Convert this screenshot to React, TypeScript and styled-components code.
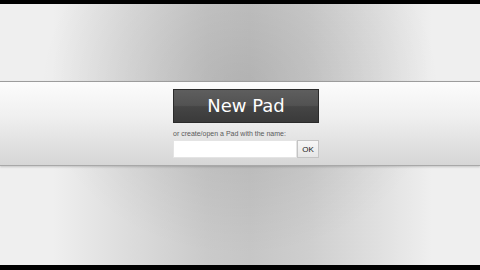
import React from "react";
import styled, { createGlobalStyle } from "styled-components";

const Global = createGlobalStyle`
  html, body { margin: 0; padding: 0; background: #000; }
  body { width: 480px; height: 270px; overflow: hidden; }
`;

const Frame = styled.div`
  width: 480px;
  height: 270px;
  box-sizing: border-box;
  padding: 4px 0 5px;
  background: #000;
  display: flex;
  flex-direction: column;
`;

const Screen = styled.div`
  flex: 1;
  display: flex;
  flex-direction: column;
  background:
    radial-gradient(ellipse 200px 170px at 240px 81px, rgba(0,0,0,0.1), rgba(0,0,0,0) 100%),
    linear-gradient(to right, #efefef 0%, #efefef 11%, #dcdcdc 27%, #cacaca 43%, #c6c6c6 52%, #cecece 64%, #e0e0e0 79%, #efefef 90%, #efefef 100%);
`;

const Spacer = styled.div<{ $h: number }>`
  height: ${(p) => p.$h}px;
  flex: none;
`;

const Band = styled.div`
  flex: none;
  box-sizing: border-box;
  height: 85px;
  border-top: 1px solid #9c9c9c;
  border-bottom: 1px solid #a8a8a8;
  background: linear-gradient(to bottom, #fcfcfc 0%, #f0f0f0 40%, #d6d6d6 100%);
  box-shadow: 0 1px 2px rgba(0, 0, 0, 0.18);
  display: flex;
  justify-content: center;
  padding: 7px 0 0 12px;
`;

const Column = styled.div`
  width: 146px;
  display: flex;
  flex-direction: column;
`;

const NewPadButton = styled.button`
  width: 146px;
  height: 34px;
  margin: 0;
  padding: 0;
  box-sizing: border-box;
  border: 1px solid #2b2b2b;
  background: linear-gradient(to bottom, #5e5e5e 0%, #525252 48%, #454545 52%, #3a3a3a 100%);
  color: #fff;
  font-family: "DejaVu Sans", Verdana, sans-serif;
  font-size: 18px;
  line-height: 32px;
  text-align: center;
  cursor: pointer;
`;

const Label = styled.div`
  margin-top: 6px;
  height: 10px;
  line-height: 10px;
  font-family: "Liberation Sans", Arial, sans-serif;
  font-size: 7px;
  color: #5a5a5a;
  white-space: nowrap;
`;

const Row = styled.div`
  margin-top: 1px;
  display: flex;
  height: 18px;
`;

const NameInput = styled.input`
  width: 124px;
  height: 18px;
  box-sizing: border-box;
  margin: 0;
  border: 1px solid #e4e4e4;
  background: #fff;
  padding: 0 3px;
  font-family: "Liberation Sans", Arial, sans-serif;
  font-size: 8px;
  outline: none;
`;

const OkButton = styled.button`
  width: 22px;
  height: 18px;
  box-sizing: border-box;
  margin: 0;
  padding: 0;
  border: 1px solid #c4c4c4;
  background: linear-gradient(to bottom, #f7f7f7, #e6e6e6);
  font-family: "Liberation Sans", Arial, sans-serif;
  font-size: 8px;
  color: #1a1a1a;
  cursor: pointer;
`;

export default function App() {
  return (
    <>
      <Global />
      <Frame>
        <Screen>
          <Spacer $h={77} />
          <Band>
            <Column>
              <NewPadButton>New Pad</NewPadButton>
              <Label>or create/open a Pad with the name:</Label>
              <Row>
                <NameInput type="text" />
                <OkButton>OK</OkButton>
              </Row>
            </Column>
          </Band>
        </Screen>
      </Frame>
    </>
  );
}
